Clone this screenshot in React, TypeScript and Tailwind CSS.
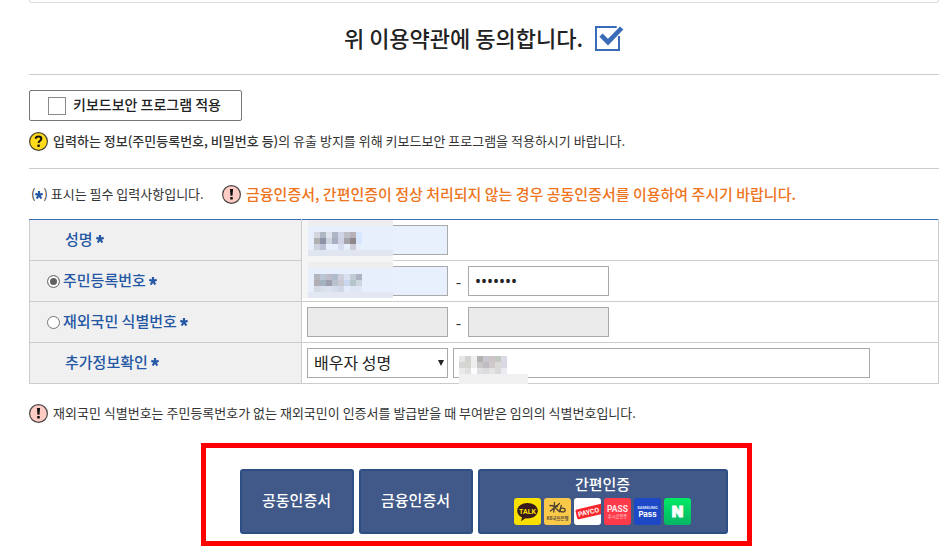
import { useState } from 'react';

// censored values, 6px cells
const NAME_CELLS = [
  ['#d3d6df', '#afb6c4', '#dfe3ee', '#afb6c4', '#cfd5e6', '#bdbfc6', '#b8b0b8', '#d6e6ff'],
  ['#b0b0b3', '#8d92a6', '#cdd4de', '#a9aec3', '#cfd3e4', '#a3a3a9', '#8f8789', '#d6e6ff'],
  ['#ced2de', '#bcc2d3', '#e7effd', '#e7effd', '#d6ddf0', '#e7effd', '#cfcdd9', '#e7effd'],
];
const NUMBER_CELLS = [
  ['#b3b6bc', '#bcc5d5', '#bdbccb', '#b0bccb', '#cdced9', '#d9e0f3', '#bfccd3', '#aeb3c1'],
  ['#afafb3', '#a3b4c0', '#9d9dad', '#b8c2cd', '#cac8d0', '#ccd6f1', '#b5c6ca', '#cdd5df'],
  ['#d5d9e5', '#dbdfec', '#dde2f0', '#d5dcea', '#d0d7e6', '#e4ecfb', '#dee5f5', '#dfe6f6'],
];
const SPOUSE_CELLS = [
  ['#e6e6e6', '#d2d2d0', '#efefef', '#b2b2b2', '#c8c6cf', '#cdc5c7', '#c1c9c2', '#dcd9e6'],
  ['#d6d6d6', '#d5d5d0', '#eeeeee', '#c9c7c7', '#bfbcc2', '#cfcaca', '#d9d9d7', '#d9d8e3'],
  ['#e9e9e9', '#e0e0e0', '#fafcff', '#e0e0e2', '#dcdce0', '#e3e3e3', '#dadada', '#ebe9f1'],
];

const Cells = ({ rows, x, y }: { rows: string[][]; x: number; y: number }) => (
  <g>
    {rows.map((row, r) =>
      row.map((fill, c) => (
        <rect key={`${r}-${c}`} x={x + c * 6} y={y + r * 6} width="6" height="6" fill={fill} />
      ))
    )}
  </g>
);

const Star = () => (
  <svg className="inline-block size-2 shrink-0" viewBox="0 0 8 8" stroke="#2457a4" strokeWidth="2.2" aria-hidden="true">
    <path d="M4 4V0M4 4L0.3 2.9M4 4L7.7 2.9M4 4L1.7 7.5M4 4L6.3 7.5" />
  </svg>
);

const WarnIcon = () => (
  <svg className="size-5 shrink-0" viewBox="0 0 20 20" aria-hidden="true">
    <circle cx="9.5" cy="9.5" r="8.9" fill="#ffcbc5" stroke="#4a4444" strokeWidth="1.2" />
    <path d="M7.900 4h3.200l-.6 6.800h-2z" fill="#111" />
    <rect x="8.2" y="11.9" width="2.6" height="2.6" rx="0.6" fill="#111" />
  </svg>
);

const HelpIcon = () => (
  <svg className="size-5 shrink-0" viewBox="0 0 20 20" fill="none" aria-hidden="true">
    <circle cx="9.5" cy="9.5" r="8.9" fill="#ffdb1a" stroke="#4a4430" strokeWidth="1.2" />
    <path d="M6.700 6.800C6.800 5.200 8 4.500 9.500 4.500s2.800.8 2.800 2.300c0 2-2.700 2.100-2.700 4.300" stroke="#111" strokeWidth="2" />
    <rect x="8.4" y="12.5" width="2.4" height="2.4" rx="0.6" fill="#111" />
  </svg>
);

const AppIcons = () => (
  <span className="flex gap-[3px]" aria-hidden="true">
    <svg className="size-[27px] rounded-[3px]" viewBox="0 0 27 27">
      <rect width="27" height="27" fill="#f9e000" />
      <path d="M13.5 5C7.600 5 3.200 8.400 3.200 12.800c0 2.900 1.900 5.300 4.800 6.600L7 23.200l4.500-2.900 2 .2c5.900 0 10.300-3.300 10.300-7.700S19.400 5 13.500 5z" fill="#391b1b" />
      <text x="13.5" y="15.6" textAnchor="middle" fontSize="7" fontWeight="700" fill="#f9e000" fontFamily="Roboto, sans-serif">TALK</text>
    </svg>
    <svg className="size-[27px] rounded-[3px]" viewBox="0 0 27 27">
      <rect width="27" height="27" fill="#fbc94a" />
      <g stroke="#49402f" strokeWidth="1.3" fill="none" strokeLinecap="round">
        <path d="M10.500 4.500L9.800 14M6 7.500l7.500 1M15.500 5.500L6.500 13M11 9.500l4.500 4.300M17.200 7.500l-1.400 6" />
        <ellipse cx="18.600" cy="12" rx="2.600" ry="1.900" />
      </g>
      <text x="13.5" y="22" textAnchor="middle" fontSize="4.4" fontWeight="700" fill="#5b503a" fontFamily="'Noto Sans CJK KR', sans-serif">KB국민은행</text>
    </svg>
    <svg className="size-[27px] rounded-[3px]" viewBox="0 0 27 27">
      <rect width="27" height="27" fill="#fff" />
      <g transform="rotate(-13 14 14)">
        <rect x="2" y="9" width="30" height="10" rx="1.5" fill="#f9262b" />
        <text x="4" y="16.5" fontSize="6.8" fontWeight="700" fill="#fff" fontFamily="Roboto, sans-serif">PAYCO</text>
      </g>
    </svg>
    <svg className="size-[27px] rounded-[3px]" viewBox="0 0 27 27">
      <rect width="27" height="27" fill="#ff3b4b" />
      <text x="13.5" y="14" textAnchor="middle" fontSize="8.5" fontWeight="700" fill="#ffe5e7" fontFamily="Roboto, sans-serif">PASS</text>
      <text x="13.5" y="20.3" textAnchor="middle" fontSize="4.2" fill="#ffc0c5" fontFamily="'Noto Sans CJK KR', sans-serif">수시로인증</text>
    </svg>
    <svg className="size-[27px] rounded-[3px]" viewBox="0 0 27 27">
      <rect width="27" height="27" fill="#1d49c6" />
      <text x="13.5" y="10.8" textAnchor="middle" fontSize="3.9" fontWeight="700" fill="#d9e2ff" fontFamily="Inter, sans-serif">SAMSUNG</text>
      <text x="13.5" y="18.6" textAnchor="middle" fontSize="7.8" fontWeight="700" fill="#fff" fontFamily="Inter, sans-serif">Pass</text>
    </svg>
    <svg className="size-[27px] rounded-[3px]" viewBox="0 0 27 27">
      <defs>
        <linearGradient id="naver" x1="0" y1="0" x2="0" y2="1">
          <stop offset="0" stopColor="#00ea64" />
          <stop offset="1" stopColor="#06b566" />
        </linearGradient>
      </defs>
      <rect width="27" height="27" fill="url(#naver)" />
      <text x="13.5" y="19" textAnchor="middle" fontSize="15" fontWeight="900" fill="#fff" stroke="#fff" strokeWidth="0.8" fontFamily="Inter, sans-serif">N</text>
    </svg>
  </span>
);

const th = 'h-[41px] border border-[#cccccc] bg-[#f0f0f0] text-left text-[15px] font-medium text-[#2457a4]';
const td = 'border border-[#cccccc] px-[5px] py-0 align-middle';
const field = 'h-[30px] w-[141px] border border-[#a9a9a9] px-[6px] text-base text-[#222]';
const radio = 'size-[13px] shrink-0 appearance-none rounded-full border border-[#767676] bg-white checked:bg-[#606060] checked:shadow-[inset_0_0_0_2px_#fff]';
const button = 'flex h-[65px] flex-col items-center justify-center rounded-[3px] border-2 border-[#2d4d85] bg-[#405988] pb-1 text-[15px] font-medium text-white';

export default function App() {
  const [agreed, setAgreed] = useState(true);
  const [idType, setIdType] = useState('resident');

  return (
    <main className="bg-white pr-[6px] pl-[29px] font-['Noto_Sans_CJK_KR',sans-serif] text-[13px] leading-5 text-[#333]">
      <div className="h-[3px] rounded-b-[3px] border border-t-0 border-[#dddddd]" />

      <div className="flex h-[72px] items-center justify-center gap-3 border-b border-[#cccccc] pr-1 text-[22px] font-medium text-[#222]">
        <label htmlFor="agree" className="pb-1">위 이용약관에 동의합니다.</label>
        <span className="relative size-[25px]">
          <input
            id="agree"
            type="checkbox"
            checked={agreed}
            onChange={(e) => setAgreed(e.target.checked)}
            className="block size-[25px] appearance-none border-2 border-[#3a6bb8]"
          />
          {agreed && (
            <svg className="pointer-events-none absolute top-0 left-0 h-[25px] w-[29px] overflow-visible" viewBox="0 0 29 25" fill="none">
              <path d="M21.500 -1h6v11h-5z" fill="#fff" />
              <path d="M6 9.200l7 7L26.700 2" stroke="#3a6bb8" strokeWidth="4.6" />
            </svg>
          )}
        </span>
      </div>

      <div className="border-b border-[#cccccc] pt-[15px] pb-[15px]">
        <label className="flex h-[31px] w-[213px] items-center gap-[7px] rounded-[2px] border border-[#777777] pl-[18px] text-sm font-medium text-[#222]">
          <input type="checkbox" className="size-[18px] appearance-none border border-[#8a8a8a] bg-white checked:bg-[#3a6bb8]" />
          <span className="pb-1">키보드보안 프로그램 적용</span>
        </label>
        <p className="mt-[10px] flex items-center gap-1">
          <HelpIcon />
          <span className="pb-[2px]">
            <b className="font-medium">입력하는 정보(주민등록번호, 비밀번호 등)</b>의 유출 방지를 위해 키보드보안 프로그램을 적용하시기 바랍니다.
          </span>
        </p>
      </div>

      <div className="flex h-[50px] items-center pt-[2px]">
        <p className="flex w-[193px] items-center whitespace-nowrap">
          <span className="pb-[2px] pl-[2px]">(</span>
          <Star />
          <span className="pb-[2px]">) 표시는 필수 입력사항입니다.</span>
        </p>
        <p className="flex items-center gap-1 text-[15px] font-medium text-[#ee7420]">
          <WarnIcon />
          <span className="pb-[2px]">금융인증서, 간편인증이 정상 처리되지 않는 경우 공동인증서를 이용하여 주시기 바랍니다.</span>
        </p>
      </div>

      <table className="w-full table-fixed border-collapse">
        <colgroup>
          <col className="w-[272px]" />
          <col />
        </colgroup>
        <tbody>
          <tr>
            <th className={`${th} border-t-[#3a6bb8] pb-[2px] pl-[35px]`}>
              <label htmlFor="name" className="flex items-center gap-[3px]">성명 <Star /></label>
            </th>
            <td className={`${td} relative border-t-[#3a6bb8]`}>
              <input id="name" className={`${field} block bg-[#e8f0fe]`} />
              <svg className="pointer-events-none absolute top-0 left-0 z-10 h-[78px] w-[91px]" viewBox="0 0 91 78" shapeRendering="crispEdges">
                <rect width="91" height="78" fill="#f5f5f5" />
                <rect x="6" width="85" height="6" fill="#eeeeee" />
                <rect x="6" y="6" width="85" height="24" fill="#e7effd" />
                <rect x="6" y="30" width="85" height="6" fill="#e0e5ef" />
                <rect x="6" y="42" width="85" height="6" fill="#eeeeee" />
                <rect x="6" y="48" width="85" height="24" fill="#e7effd" />
                <rect x="6" y="72" width="85" height="6" fill="#e2e7f1" />
                <Cells rows={NAME_CELLS} x={12} y={12} />
                <Cells rows={NUMBER_CELLS} x={12} y={54} />
              </svg>
            </td>
          </tr>
          <tr>
            <th className={`${th} pl-[17px]`}>
              <label className="flex items-center gap-[3px]">
                <input type="radio" name="idType" className={radio} checked={idType === 'resident'} onChange={() => setIdType('resident')} />
                <span className="pb-[2px]">주민등록번호</span>
                <Star />
              </label>
            </th>
            <td className={td}>
              <div className="flex items-center">
                <input aria-label="주민등록번호 앞자리" className={`${field} bg-[#e8f0fe]`} />
                <span className="w-5 pl-px text-center text-base">-</span>
                <input type="password" aria-label="주민등록번호 뒷자리" defaultValue="1234567" className={`${field} bg-white font-['Noto_Sans']`} />
              </div>
            </td>
          </tr>
          <tr>
            <th className={`${th} pl-[17px]`}>
              <label className="flex items-center gap-[3px]">
                <input type="radio" name="idType" className={radio} checked={idType === 'overseas'} onChange={() => setIdType('overseas')} />
                <span className="pb-[2px]">재외국민 식별번호</span>
                <Star />
              </label>
            </th>
            <td className={td}>
              <div className="flex items-center">
                <input disabled={idType !== 'overseas'} aria-label="재외국민 식별번호 앞자리" className={`${field} bg-[#ebebeb]`} />
                <span className="w-5 pl-px text-center text-base">-</span>
                <input disabled={idType !== 'overseas'} aria-label="재외국민 식별번호 뒷자리" className={`${field} bg-[#ebebeb]`} />
              </div>
            </td>
          </tr>
          <tr>
            <th className={`${th} pb-[2px] pl-[35px]`}>
              <label htmlFor="extra" className="flex items-center gap-[3px]">추가정보확인 <Star /></label>
            </th>
            <td className={td}>
              <div className="flex items-center gap-[5px]">
                <div className="relative">
                  <select id="extra" className={`${field} block appearance-none bg-white pb-[2px]`}>
                    <option>배우자 성명</option>
                    <option>부 성명</option>
                    <option>모 성명</option>
                  </select>
                  <svg className="pointer-events-none absolute top-3 right-1 h-[6px] w-[6px]" viewBox="0 0 6 6">
                    <path d="M0 0h6L3 6z" fill="#222" />
                  </svg>
                </div>
                <div className="relative w-full max-w-[417px]">
                  <input aria-label="배우자 성명" className="block h-[30px] w-full border border-[#a9a9a9] bg-white px-[6px] text-base" />
                  <svg className="pointer-events-none absolute top-2 left-[6px] h-7 w-[69px]" viewBox="0 0 69 28" shapeRendering="crispEdges">
                    <rect y="18" width="69" height="10" fill="#f0f0f0" />
                    <Cells rows={SPOUSE_CELLS} x={0} y={0} />
                  </svg>
                </div>
              </div>
            </td>
          </tr>
        </tbody>
      </table>

      <p className="mt-[19px] flex items-center gap-1">
        <WarnIcon />
        <span className="pb-[2px]">재외국민 식별번호는 주민등록번호가 없는 재외국민이 인증서를 발급받을 때 부여받은 임의의 식별번호입니다.</span>
      </p>

      <div className="flex justify-center pt-[18px] pr-4">
        <div className="flex gap-[5px] border-[5px] border-[#ff0000] pt-[21px] pr-[19px] pb-[7px] pl-[34px]">
          <button type="button" className={`${button} w-[114px]`}>공동인증서</button>
          <button type="button" className={`${button} w-[114px]`}>금융인증서</button>
          <button type="button" className={`${button} w-[250px] gap-1`}>
            간편인증
            <AppIcons />
          </button>
        </div>
      </div>
    </main>
  );
}
